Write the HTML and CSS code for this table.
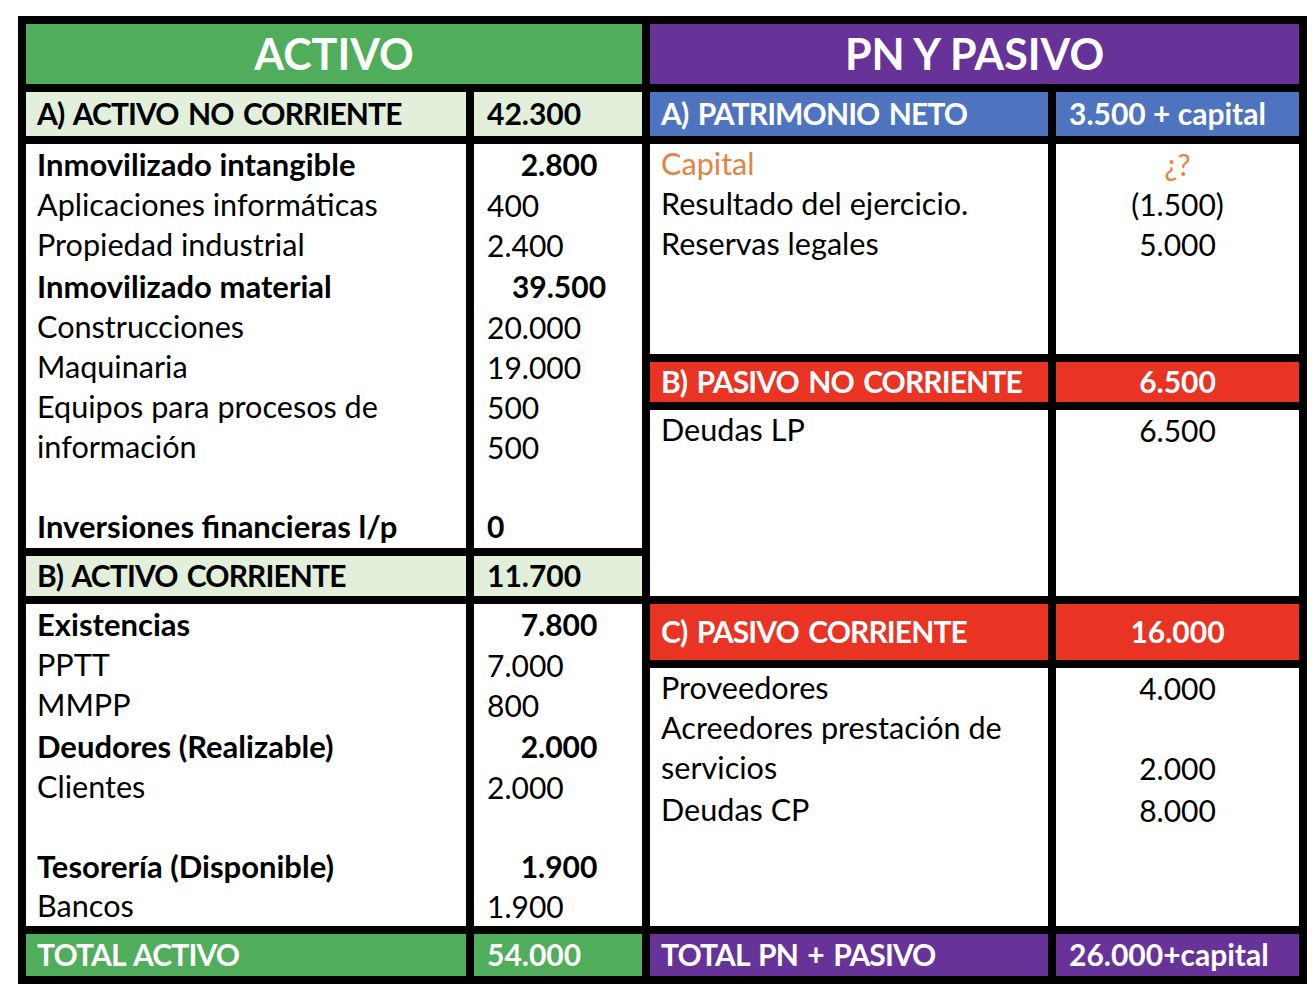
FILE: index.html
```html
<!DOCTYPE html>
<html lang="es">
<head>
<meta charset="utf-8">
<title>Balance</title>
<link rel="stylesheet" href="styles.css">
</head>
<body>
<div class="sheet">
  <div class="side left">
    <div class="cell title green">ACTIVO</div>

    <div class="cell head lgreen lbl">A) ACTIVO NO CORRIENTE</div>
    <div class="cell head lgreen val-left">42.300</div>

    <div class="cell body txt">
      <div class="ln b">Inmovilizado intangible</div>
      <div class="ln">Aplicaciones informáticas</div>
      <div class="ln">Propiedad industrial</div>
      <div class="ln b">Inmovilizado material</div>
      <div class="ln">Construcciones</div>
      <div class="ln">Maquinaria</div>
      <div class="ln">Equipos para procesos de</div>
      <div class="ln">información</div>
      <div class="sp"></div>
      <div class="ln b">Inversiones financieras l/p</div>
    </div>
    <div class="cell body nums">
      <div class="ln b c">2.800</div>
      <div class="ln">400</div>
      <div class="ln">2.400</div>
      <div class="ln b c">39.500</div>
      <div class="ln">20.000</div>
      <div class="ln">19.000</div>
      <div class="ln">500</div>
      <div class="ln">500</div>
      <div class="sp"></div>
      <div class="ln b">0</div>
    </div>

    <div class="cell head lgreen lbl">B) ACTIVO CORRIENTE</div>
    <div class="cell head lgreen val-left">11.700</div>

    <div class="cell body txt">
      <div class="ln b">Existencias</div>
      <div class="ln">PPTT</div>
      <div class="ln">MMPP</div>
      <div class="ln b">Deudores (Realizable)</div>
      <div class="ln">Clientes</div>
      <div class="sp"></div>
      <div class="ln b">Tesorería (Disponible)</div>
      <div class="ln last">Bancos</div>
    </div>
    <div class="cell body nums">
      <div class="ln b c">7.800</div>
      <div class="ln">7.000</div>
      <div class="ln">800</div>
      <div class="ln b c">2.000</div>
      <div class="ln">2.000</div>
      <div class="sp"></div>
      <div class="ln b c">1.900</div>
      <div class="ln last">1.900</div>
    </div>

    <div class="cell head green lbl">TOTAL ACTIVO</div>
    <div class="cell head green val-left">54.000</div>
  </div>

  <div class="side right">
    <div class="cell title purple">PN Y PASIVO</div>

    <div class="cell head blue lbl">A) PATRIMONIO NETO</div>
    <div class="cell head blue val-left">3.500 + capital</div>

    <div class="cell body txt top1">
      <div class="ln orange">Capital</div>
      <div class="ln">Resultado del ejercicio.</div>
      <div class="ln">Reservas legales</div>
    </div>
    <div class="cell body top1 center">
      <div class="ln orange">¿?</div>
      <div class="ln">(1.500)</div>
      <div class="ln">5.000</div>
    </div>

    <div class="cell head red lbl">B) PASIVO NO CORRIENTE</div>
    <div class="cell head red center">6.500</div>

    <div class="cell body txt top1">
      <div class="ln">Deudas LP</div>
    </div>
    <div class="cell body top1 center">
      <div class="ln">6.500</div>
    </div>

    <div class="cell head red lbl">C) PASIVO CORRIENTE</div>
    <div class="cell head red center">16.000</div>

    <div class="cell body txt top1">
      <div class="ln">Proveedores</div>
      <div class="ln">Acreedores prestación de</div>
      <div class="ln">servicios</div>
      <div class="ln tall">Deudas CP</div>
    </div>
    <div class="cell body top1 center">
      <div class="ln">4.000</div>
      <div class="ln"></div>
      <div class="ln">2.000</div>
      <div class="ln tall">8.000</div>
    </div>

    <div class="cell head purple lbl">TOTAL PN + PASIVO</div>
    <div class="cell head purple val-left">26.000+capital</div>
  </div>
</div>
</body>
</html>
```

FILE: styles.css
```css
html, body {
  margin: 0;
  padding: 0;
  background: #ffffff;
}

body {
  font-family: Lato, "Open Sans", "Liberation Sans", sans-serif;
  color: #000000;
}

.sheet {
  display: flex;
  gap: 8px;
  padding: 8px;
  margin: 16px 0 0 18px;
  width: max-content;
  background: #000000;
}

.side {
  display: grid;
  gap: 8px;
}

.left {
  grid-template-columns: 440px 168px;
  grid-template-rows: 60px 44px 404px 40px 322px 42px;
}

.right {
  grid-template-columns: 398px 243px;
  grid-template-rows: 60px 44px 210px 40px 186px 56px 258px 42px;
}

.cell {
  background: #ffffff;
  padding: 0 11px;
  font-size: 30px;
  white-space: nowrap;
  overflow: hidden;
}

.title {
  grid-column: 1 / 3;
  display: flex;
  align-items: center;
  justify-content: center;
  font-size: 43px;
  font-weight: 700;
  color: #ffffff;
  padding-bottom: 2px;
}

.head {
  display: flex;
  align-items: center;
  font-weight: 700;
  padding-bottom: 2px;
}

.head.lbl {
  letter-spacing: -0.9px;
  word-spacing: 3px;
}

.head.val-left {
  padding-left: 13px;
}

.head.center {
  justify-content: center;
}

.green {
  background: #4fad5b;
  color: #ffffff;
}

.lgreen {
  background: #e2efda;
  color: #000000;
}

.purple {
  background: #673399;
  color: #ffffff;
}

.blue {
  background: #4e73bf;
  color: #ffffff;
}

.red {
  background: #e93323;
  color: #ffffff;
}

.body {
  display: flex;
  flex-direction: column;
}

.txt {
  font-size: 30.6px;
}

.nums {
  padding-left: 13px;
}

.top1 {
  padding-top: 1px;
}

.ln {
  height: 40px;
  line-height: 38px;
  flex: none;
}

.ln.b {
  height: 42px;
  line-height: 40px;
  font-weight: 700;
}

.txt .ln.b {
  font-size: 31px;
}

.ln.c {
  text-align: center;
}

.ln.tall {
  height: 42px;
  line-height: 42px;
}

.ln.last {
  height: 38px;
  line-height: 36px;
}

.sp {
  height: 38px;
  flex: none;
}

.center .ln {
  text-align: center;
}

.orange {
  color: #e5843f;
}
```
